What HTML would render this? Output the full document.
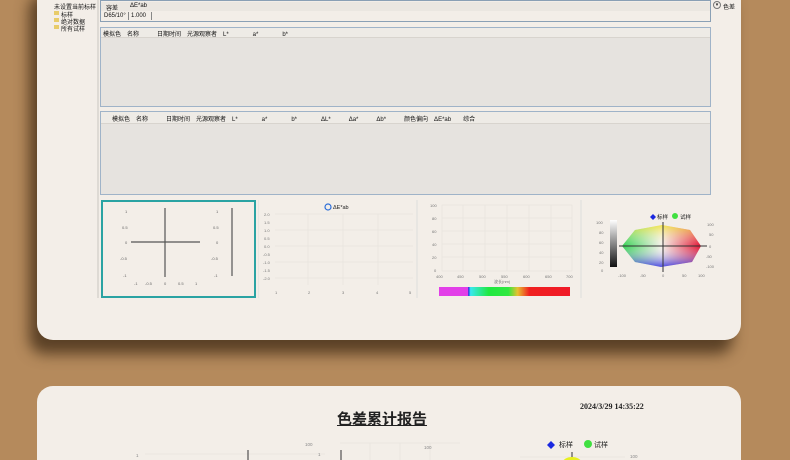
<!DOCTYPE html>
<html style="width:790px;height:460px;overflow:hidden"><head><meta charset="utf-8"><style>
*{margin:0;padding:0;box-sizing:border-box}
body{width:790px;height:460px;overflow:hidden;background:#b58a5c;position:relative;font-family:"Liberation Sans","Noto Sans CJK SC",sans-serif;color:#222}
.a{position:absolute}
.p1{left:37px;top:-20px;width:704px;height:360px;background:#f3eee8;border-radius:16px;box-shadow:-8px 14px 14px rgba(60,40,20,.75)}
.p2{left:37px;top:386px;width:704px;height:74px;background:#f3eee8;border-radius:16px 16px 0 0}
.t{font-size:6px;white-space:nowrap;color:#111}
.box{border:1px solid #9fb3c8;background:#e6e3df}
.hd{background:#eeebe6;border-bottom:1px solid #d8d4ce;height:10px}
</style></head><body>
<div class="a p1"></div>
<div class="a p2"></div>
<div class="a t" style="left:54px;top:2px">未设置当前标样</div>
<div class="a" style="left:54px;top:11px;width:5px;height:4px;background:#e8cc6a"></div><div class="a t" style="left:61px;top:10px">标样</div>
<div class="a" style="left:54px;top:18px;width:5px;height:4px;background:#e8cc6a"></div><div class="a t" style="left:61px;top:17px">绝对数据</div>
<div class="a" style="left:54px;top:25px;width:5px;height:4px;background:#e8cc6a"></div><div class="a t" style="left:61px;top:24px">所有试样</div>
<div class="a" style="left:97px;top:0;width:2px;height:298px;background:#dedad4"></div>
<div class="a" style="left:100px;top:0;width:611px;height:22px;border:1px solid #8aa0b5;background:#f3eee8"></div>
<div class="a" style="left:101px;top:2px;width:609px;height:9px;background:#ebe7e1"></div>
<div class="a t" style="left:106px;top:3px">容差</div><div class="a t" style="left:130px;top:3px">ΔE*ab</div>
<div class="a t" style="left:104px;top:13px">D65/10°</div><div class="a" style="left:128px;top:12px;width:1px;height:8px;background:#888"></div>
<div class="a t" style="left:131px;top:13px">1.000</div><div class="a" style="left:151px;top:12px;width:1px;height:8px;background:#888"></div>
<div class="a" style="left:713px;top:1px;width:8px;height:8px;border:1px solid #777;border-radius:50%;font-size:5px;line-height:6px;text-align:center">▾</div>
<div class="a t" style="left:723px;top:2px">色差</div>
<div class="a box" style="left:100px;top:27px;width:611px;height:80px"><div class="hd"></div></div>
<div class="a t" style="left:103px;top:29px">模拟色　名称　　　日期时间　光源观察者　L*　　　　a*　　　　b*</div>
<div class="a box" style="left:100px;top:111px;width:611px;height:84px"><div class="hd" style="height:12px"></div></div>
<div class="a t" style="left:112px;top:114px">模拟色　名称　　　日期时间　光源观察者　L*　　　　a*　　　　b*　　　　ΔL*　　　Δa*　　　Δb*　　　颜色偏向　ΔE*ab　　综合</div>
<div class="a" style="left:101px;top:200px;width:155px;height:98px;border:2px solid #2aa3a3"></div>
<svg class="a" style="left:101px;top:200px" width="160" height="100">
<line x1="30" y1="42" x2="99" y2="42" stroke="#555" stroke-width="1.2"/>
<line x1="64" y1="8" x2="64" y2="77" stroke="#555" stroke-width="1.2"/>
<line x1="131" y1="8" x2="131" y2="76" stroke="#555" stroke-width="1.2"/>
<g font-size="4" fill="#666"><text x="24" y="13">1</text><text x="21" y="29">0.5</text><text x="24" y="44">0</text><text x="19" y="60">-0.5</text><text x="22" y="77">-1</text>
<text x="115" y="13">1</text><text x="112" y="29">0.5</text><text x="115" y="44">0</text><text x="110" y="60">-0.5</text><text x="113" y="77">-1</text>
<text x="33" y="85">-1</text><text x="44" y="85">-0.5</text><text x="63" y="85">0</text><text x="77" y="85">0.5</text><text x="94" y="85">1</text></g>
</svg>
<svg class="a" style="left:258px;top:200px" width="160" height="98">
<line x1="0" y1="0" x2="0" y2="98" stroke="#ddd"/><line x1="159" y1="0" x2="159" y2="98" stroke="#ddd"/>
<circle cx="70" cy="7" r="3" fill="none" stroke="#2c6ed8" stroke-width="1.2"/><text x="75" y="9" font-size="5.5" fill="#222">ΔE*ab</text>
<g stroke="#e3dfd9" stroke-width=".5"><line x1="17" y1="14" x2="155" y2="14"/><line x1="17" y1="30" x2="155" y2="30"/><line x1="17" y1="46" x2="155" y2="46"/><line x1="17" y1="62" x2="155" y2="62"/><line x1="17" y1="78" x2="155" y2="78"/><line x1="50" y1="14" x2="50" y2="85"/><line x1="85" y1="14" x2="85" y2="85"/><line x1="120" y1="14" x2="120" y2="85"/></g>
<g font-size="4" fill="#777"><text x="6" y="16">2.0</text><text x="6" y="24">1.5</text><text x="6" y="32">1.0</text><text x="6" y="40">0.5</text><text x="6" y="48">0.0</text><text x="5" y="56">-0.5</text><text x="5" y="64">-1.0</text><text x="5" y="72">-1.5</text><text x="5" y="80">-2.0</text>
<text x="17" y="94">1</text><text x="50" y="94">2</text><text x="84" y="94">3</text><text x="118" y="94">4</text><text x="151" y="94">5</text></g>
</svg>
<svg class="a" style="left:418px;top:200px" width="165" height="98">
<line x1="163" y1="0" x2="163" y2="98" stroke="#ddd"/>
<g stroke="#e3dfd9" stroke-width=".5"><rect x="24" y="5" width="130" height="66" fill="none"/><line x1="24" y1="18" x2="154" y2="18"/><line x1="24" y1="31" x2="154" y2="31"/><line x1="24" y1="44" x2="154" y2="44"/><line x1="24" y1="57" x2="154" y2="57"/><line x1="45" y1="5" x2="45" y2="71"/><line x1="67" y1="5" x2="67" y2="71"/><line x1="89" y1="5" x2="89" y2="71"/><line x1="111" y1="5" x2="111" y2="71"/><line x1="133" y1="5" x2="133" y2="71"/></g>
<g font-size="4" fill="#777"><text x="12" y="7">100</text><text x="14" y="20">80</text><text x="14" y="33">60</text><text x="14" y="46">40</text><text x="14" y="59">20</text><text x="16" y="72">0</text>
<text x="18" y="78">400</text><text x="39" y="78">450</text><text x="61" y="78">500</text><text x="83" y="78">550</text><text x="105" y="78">600</text><text x="127" y="78">650</text><text x="148" y="78">700</text><text x="76" y="83">波长(nm)</text></g>
<defs><linearGradient id="sp" x1="0" x2="1"><stop offset="0" stop-color="#e23fe8"/><stop offset=".22" stop-color="#e23fe8"/><stop offset=".225" stop-color="#2030e0"/><stop offset=".24" stop-color="#38e8f0"/><stop offset=".38" stop-color="#20e840"/><stop offset=".53" stop-color="#30e840"/><stop offset=".6" stop-color="#e8c030"/><stop offset=".69" stop-color="#f02020"/><stop offset="1" stop-color="#f01a28"/></linearGradient></defs>
<rect x="21" y="87" width="131" height="9" fill="url(#sp)"/>
</svg>
<svg class="a" style="left:585px;top:200px" width="150" height="98">
<defs><linearGradient id="gr" x1="0" y1="0" x2="0" y2="1"><stop offset="0" stop-color="#fff"/><stop offset="1" stop-color="#111"/></linearGradient>
<linearGradient id="lr" x1="0" x2="1"><stop offset="0" stop-color="#30d050"/><stop offset=".5" stop-color="#f4f0e8"/><stop offset="1" stop-color="#e01030"/></linearGradient>
<linearGradient id="ud" x1="0" y1="0" x2="0" y2="1"><stop offset="0" stop-color="#f0e020" stop-opacity=".75"/><stop offset=".5" stop-color="#ffffff" stop-opacity="0"/><stop offset="1" stop-color="#3030e0" stop-opacity=".85"/></linearGradient></defs>
<polygon points="77,25 105,30 116,46 107,62 76,67 50,62 37,46 50,30" fill="url(#lr)"/>
<polygon points="77,25 105,30 116,46 107,62 76,67 50,62 37,46 50,30" fill="url(#ud)"/>
<rect x="25" y="20" width="7" height="47" fill="url(#gr)"/>
<line x1="34" y1="46" x2="122" y2="46" stroke="#333" stroke-width="1"/>
<line x1="78" y1="22" x2="78" y2="72" stroke="#333" stroke-width="1"/>
<path d="M65 17 l3 -3 l3 3 l-3 3z" fill="#1a28e0"/><text x="72" y="19" font-size="5.5" fill="#222">标样</text>
<circle cx="90" cy="16" r="3" fill="#40e040"/><text x="95" y="19" font-size="5.5" fill="#222">试样</text>
<g font-size="4" fill="#777"><text x="11" y="24">100</text><text x="14" y="34">80</text><text x="14" y="44">60</text><text x="14" y="54">40</text><text x="14" y="64">20</text><text x="16" y="72">0</text>
<text x="122" y="26">100</text><text x="124" y="36">50</text><text x="124" y="48">0</text><text x="121" y="58">-50</text><text x="121" y="68">-100</text>
<text x="33" y="77">-100</text><text x="55" y="77">-50</text><text x="77" y="77">0</text><text x="97" y="77">50</text><text x="113" y="77">100</text></g>
</svg>
<div class="a" style="left:580px;top:402px;font-family:'Liberation Serif','Noto Serif CJK SC',serif;font-size:8px;font-weight:bold">2024/3/29 14:35:22</div>
<div class="a" style="left:337px;top:408px;font-size:15px;font-weight:bold;text-decoration:underline">色差累计报告</div>
<svg class="a" style="left:100px;top:436px" width="650" height="24">
<g stroke="#e3dfd9" stroke-width=".5"><line x1="45" y1="18" x2="175" y2="18"/><line x1="175" y1="18" x2="225" y2="18"/><line x1="240" y1="7" x2="360" y2="7"/><line x1="270" y1="7" x2="270" y2="24"/><line x1="300" y1="7" x2="300" y2="24"/><line x1="330" y1="7" x2="330" y2="24"/><line x1="420" y1="21" x2="525" y2="21"/></g>
<line x1="148" y1="14" x2="148" y2="24" stroke="#333"/><line x1="241" y1="14" x2="241" y2="24" stroke="#333"/>
<line x1="472" y1="16" x2="472" y2="24" stroke="#333"/>
<ellipse cx="472" cy="26" rx="9" ry="5" fill="#e8f020"/>
<g font-size="4.5" fill="#888"><text x="36" y="21">1</text><text x="218" y="20">1</text><text x="205" y="10">100</text><text x="324" y="13">100</text><text x="530" y="22">100</text></g>
<path d="M447 9 l4 -4 l4 4 l-4 4z" fill="#1a28e0"/><text x="459" y="11" font-size="7" fill="#222">标样</text>
<circle cx="488" cy="8" r="4" fill="#40e040"/><text x="494" y="11" font-size="7" fill="#222">试样</text>
</svg>
</body></html>
